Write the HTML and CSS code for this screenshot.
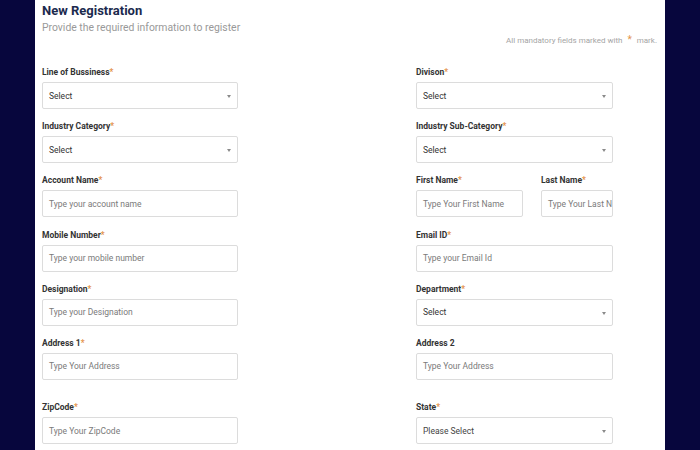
FILE: index.html
```html
<!DOCTYPE html>
<html>
<head>
<meta charset="utf-8">
<link rel="stylesheet" href="styles.css">
</head>
<body>
<div class="panel">
  <h1 class="title">New Registration</h1>
  <p class="subtitle">Provide the required information to register</p>
  <p class="note">All mandatory fields marked with <span class="req">*</span> mark.</p>
  <div class="grid">
    <div class="field">
      <label class="label">Line of Bussiness<span class="req">*</span></label>
      <div class="select">Select<span class="caret"></span></div>
    </div>
    <div class="field">
      <label class="label">Divison<span class="req">*</span></label>
      <div class="select">Select<span class="caret"></span></div>
    </div>
    <div class="field">
      <label class="label">Industry Category<span class="req">*</span></label>
      <div class="select">Select<span class="caret"></span></div>
    </div>
    <div class="field">
      <label class="label">Industry Sub-Category<span class="req">*</span></label>
      <div class="select">Select<span class="caret"></span></div>
    </div>
    <div class="field">
      <label class="label">Account Name<span class="req">*</span></label>
      <div class="input">Type your account name</div>
    </div>
    <div class="pair">
      <div class="field first">
        <label class="label">First Name<span class="req">*</span></label>
        <div class="input">Type Your First Name</div>
      </div>
      <div class="field last">
        <label class="label">Last Name<span class="req">*</span></label>
        <div class="input clip">Type Your Last N</div>
      </div>
    </div>
    <div class="field">
      <label class="label">Mobile Number<span class="req">*</span></label>
      <div class="input">Type your mobile number</div>
    </div>
    <div class="field">
      <label class="label">Email ID<span class="req">*</span></label>
      <div class="input">Type your Email Id</div>
    </div>
    <div class="field">
      <label class="label">Designation<span class="req">*</span></label>
      <div class="input">Type your Designation</div>
    </div>
    <div class="field">
      <label class="label">Department<span class="req">*</span></label>
      <div class="select">Select<span class="caret"></span></div>
    </div>
    <div class="field">
      <label class="label">Address 1<span class="req">*</span></label>
      <div class="input">Type Your Address</div>
    </div>
    <div class="field">
      <label class="label">Address 2</label>
      <div class="input">Type Your Address</div>
    </div>
    <div class="field spaced">
      <label class="label">ZipCode<span class="req">*</span></label>
      <div class="input">Type Your ZipCode</div>
    </div>
    <div class="field spaced">
      <label class="label">State<span class="req">*</span></label>
      <div class="select dark">Please Select<span class="caret"></span></div>
    </div>
  </div>
</div>
</body>
</html>
```

FILE: styles.css
```css
html, body {
  margin: 0;
  padding: 0;
  height: 100%;
}
body {
  background: #07063d;
  font-family: Roboto, "Liberation Sans", Arial, sans-serif;
  overflow: hidden;
}
.panel {
  background: #ffffff;
  margin: 0 35px;
  padding: 2px 7px 20px 7px;
  min-height: 100%;
  box-sizing: border-box;
}
.title {
  margin: 0;
  font-size: 13px;
  line-height: 18px;
  font-weight: 700;
  color: #1b2a4e;
}
.subtitle {
  margin: 1px 0 0 0;
  font-size: 10.4px;
  line-height: 14px;
  color: #999999;
}
.note {
  margin: -2px 0 0 0;
  text-align: right;
  font-size: 8px;
  line-height: 14px;
  color: #a5a5a5;
  padding-right: 1px;
}
.note .req {
  font-size: 10px;
  margin: 0 3px;
}
.req {
  color: #e4934b;
}
.grid {
  margin-top: 18px;
  display: grid;
  grid-template-columns: 196px 197px;
  column-gap: 178px;
  row-gap: 11.2px;
}
.field {
  display: flex;
  flex-direction: column;
}
.spaced {
  margin-top: 10px;
}
.label {
  font-size: 8.5px;
  line-height: 13px;
  font-weight: 700;
  color: #333333;
  margin-bottom: 3px;
}
.input, .select {
  position: relative;
  height: 27px;
  box-sizing: border-box;
  border: 1px solid #dcdcdc;
  border-radius: 2px;
  padding: 0 6px;
  display: flex;
  align-items: center;
  font-size: 8.5px;
  color: #7a7a7a;
  white-space: nowrap;
  overflow: hidden;
}
.select {
  color: #333333;
}
.select.dark {
  color: #444444;
}
.caret {
  position: absolute;
  right: 6px;
  top: 12px;
  width: 0;
  height: 0;
  border-left: 2px solid transparent;
  border-right: 2px solid transparent;
  border-top: 3px solid #8a8a8a;
}
.pair {
  display: flex;
  gap: 18px;
}
.first {
  width: 107px;
}
.last {
  width: 72px;
}
```
